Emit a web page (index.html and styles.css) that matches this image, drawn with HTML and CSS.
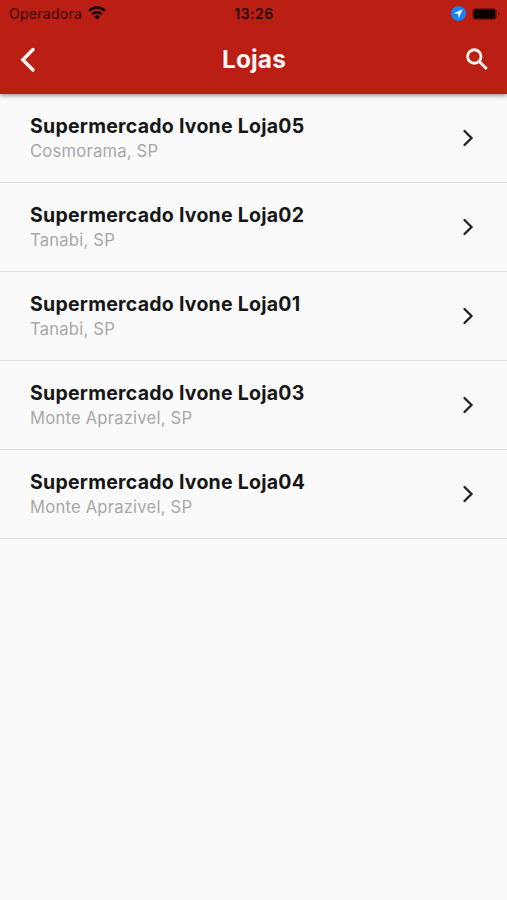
FILE: index.html
```html
<!DOCTYPE html>
<html lang="pt-BR">
<head>
<meta charset="utf-8">
<title>Lojas</title>
<link rel="stylesheet" href="styles.css">
</head>
<body>
<header class="header">
  <div class="status">
    <div class="carrier"><span class="carrier-name">Operadora</span>
      <svg class="wifi" viewBox="0 0 18 14"><path d="M9 13.500 6.200 10.700a4 4 0 0 1 5.600 0z"/><path class="arc" d="M4.200 8.300a6.900 6.900 0 0 1 9.600 0M1.100 4.800a11.400 11.400 0 0 1 15.800 0"/></svg>
    </div>
    <span class="time">13:26</span>
    <div class="indicators">
      <svg class="location" viewBox="0 0 15 15"><circle cx="7.5" cy="7.5" r="7.5"/><path d="M11.700 3.200 2.800 7.300l4.400.5.4 4.400z"/></svg>
      <svg class="battery" viewBox="0 0 28 12"><rect class="shell" x=".5" y=".5" width="24" height="11" rx="3"/><rect x="1.500" y="1.200" width="22" height="9.600" rx="1.600"/><path class="cap" d="M26 4q1.600.6 1.600 2T26 8z"/></svg>
    </div>
  </div>
  <nav class="bar">
    <svg class="back" viewBox="0 0 16 26"><path d="M13 2.500 2.800 12.700 13 22.900"/></svg>
    <h1 class="title">Lojas</h1>
    <svg class="search" viewBox="0 0 24 24"><circle cx="9.300" cy="8.500" r="6.700"/><path d="m14.300 13.500 7.500 7.500"/></svg>
  </nav>
</header>
<main class="list">
  <div class="row"><div><h2 class="name">Supermercado Ivone Loja05</h2><p class="city">Cosmorama, SP</p></div><svg class="chevron" viewBox="0 0 12 18"><path d="m2.500 2 7 7-7 7"/></svg></div>
  <div class="row"><div><h2 class="name">Supermercado Ivone Loja02</h2><p class="city">Tanabi, SP</p></div><svg class="chevron" viewBox="0 0 12 18"><path d="m2.500 2 7 7-7 7"/></svg></div>
  <div class="row"><div><h2 class="name">Supermercado Ivone Loja01</h2><p class="city">Tanabi, SP</p></div><svg class="chevron" viewBox="0 0 12 18"><path d="m2.500 2 7 7-7 7"/></svg></div>
  <div class="row"><div><h2 class="name">Supermercado Ivone Loja03</h2><p class="city">Monte Aprazivel, SP</p></div><svg class="chevron" viewBox="0 0 12 18"><path d="m2.500 2 7 7-7 7"/></svg></div>
  <div class="row"><div><h2 class="name">Supermercado Ivone Loja04</h2><p class="city">Monte Aprazivel, SP</p></div><svg class="chevron" viewBox="0 0 12 18"><path d="m2.500 2 7 7-7 7"/></svg></div>
</main>
</body>
</html>
```
FILE: styles.css
```css
* { box-sizing: border-box; }
body { margin: 0; min-height: 900px; background: #fafafa; font-family: Inter, sans-serif; color: #161616; }
svg { display: block; fill: none; }
h1, h2, p { margin: 0; white-space: nowrap; }
.header { height: 94px; background: #bb1e13; box-shadow: 0 1px 5px rgba(0,0,0,.5); }
.status { height: 27px; display: grid; grid-template-columns: 1fr auto 1fr; align-items: center; padding: 0 8px 0 9px; color: #3a0603; font-size: 14px; }
.carrier { display: flex; align-items: center; gap: 6px; }
.carrier-name { letter-spacing: .28px; }
.wifi { width: 18px; height: 14px; fill: #120201; margin-top: -1px; }
.wifi .arc { fill: none; stroke: #120201; stroke-width: 2.500; }
.time { font-weight: 600; letter-spacing: .5px; color: #1c0503; }
.indicators { display: flex; justify-content: flex-end; align-items: center; gap: 6px; }
.location { width: 15px; height: 15px; fill: #1683fb; }
.location path { fill: #fff; }
.battery { width: 28px; height: 12px; fill: #080000; margin-right: -1px; }
.battery .shell { fill: none; stroke: #841209; }
.battery .cap { fill: #841209; }
.bar { height: 65px; display: grid; grid-template-columns: 1fr auto 1fr; align-items: center; padding: 0 18px 0 20px; }
.back { width: 16px; height: 26px; stroke: #fff5f3; stroke-width: 3.500; stroke-linecap: round; }
.title { color: #fff5f3; font-size: 24.500px; line-height: 30px; font-weight: 700; letter-spacing: .1px; margin: 0 1px 2px 0; }
.search { width: 24px; height: 24px; stroke: #fff5f3; stroke-width: 2.900; justify-self: end; }
.row { height: 89.100px; display: flex; align-items: center; justify-content: space-between; padding: 0 33px 0 30px; border-bottom: 1.500px solid #dedede; }
.name { font-size: 19.500px; line-height: 26px; font-weight: 650; letter-spacing: .25px; }
.city { font-size: 16.600px; line-height: 25px; color: #a8a8a8; letter-spacing: .22px; }
.chevron { width: 12px; height: 18px; stroke: #222; stroke-width: 2.300; stroke-linecap: round; }
```
